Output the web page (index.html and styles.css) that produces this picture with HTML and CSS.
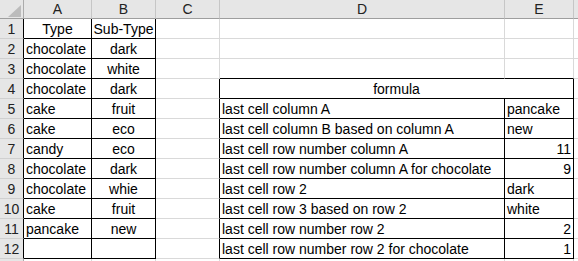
FILE: index.html
```html
<!DOCTYPE html>
<html>
<head>
<meta charset="utf-8">
<link rel="stylesheet" href="styles.css">
</head>
<body>
<div class="sheet">
  <div class="c hd corner"><span class="tri"></span></div>
  <div class="c hd ch">A</div>
  <div class="c hd ch">B</div>
  <div class="c hd ch">C</div>
  <div class="c hd ch">D</div>
  <div class="c hd ch">E</div>
  <div class="c hd ch"></div>

  <div class="c hd rh bl">1</div>
  <div class="c bx ctr">Type</div>
  <div class="c bx ctr">Sub-Type</div>
  <div class="c"></div>
  <div class="c"></div>
  <div class="c"></div>
  <div class="c"></div>

  <div class="c hd rh bl">2</div>
  <div class="c bx">chocolate</div>
  <div class="c bx ctr">dark</div>
  <div class="c"></div>
  <div class="c"></div>
  <div class="c"></div>
  <div class="c"></div>

  <div class="c hd rh bl">3</div>
  <div class="c bx">chocolate</div>
  <div class="c bx ctr">white</div>
  <div class="c"></div>
  <div class="c bb"></div>
  <div class="c bb"></div>
  <div class="c"></div>

  <div class="c hd rh bl">4</div>
  <div class="c bx">chocolate</div>
  <div class="c bx ctr">dark</div>
  <div class="c br"></div>
  <div class="c bx ctr merge">formula</div>
  <div class="c"></div>

  <div class="c hd rh bl">5</div>
  <div class="c bx">cake</div>
  <div class="c bx ctr">fruit</div>
  <div class="c br"></div>
  <div class="c bx">last cell column A</div>
  <div class="c bx">pancake</div>
  <div class="c"></div>

  <div class="c hd rh bl">6</div>
  <div class="c bx">cake</div>
  <div class="c bx ctr">eco</div>
  <div class="c br"></div>
  <div class="c bx">last cell column B based on column A</div>
  <div class="c bx">new</div>
  <div class="c"></div>

  <div class="c hd rh bl">7</div>
  <div class="c bx">candy</div>
  <div class="c bx ctr">eco</div>
  <div class="c br"></div>
  <div class="c bx">last cell row number column A</div>
  <div class="c bx num">11</div>
  <div class="c"></div>

  <div class="c hd rh bl">8</div>
  <div class="c bx">chocolate</div>
  <div class="c bx ctr">dark</div>
  <div class="c br"></div>
  <div class="c bx">last cell row number column A for chocolate</div>
  <div class="c bx num">9</div>
  <div class="c"></div>

  <div class="c hd rh bl">9</div>
  <div class="c bx">chocolate</div>
  <div class="c bx ctr">whie</div>
  <div class="c br"></div>
  <div class="c bx">last cell row 2</div>
  <div class="c bx">dark</div>
  <div class="c"></div>

  <div class="c hd rh bl">10</div>
  <div class="c bx">cake</div>
  <div class="c bx ctr">fruit</div>
  <div class="c br"></div>
  <div class="c bx">last cell row 3 based on row 2</div>
  <div class="c bx">white</div>
  <div class="c"></div>

  <div class="c hd rh bl">11</div>
  <div class="c bx">pancake</div>
  <div class="c bx ctr">new</div>
  <div class="c br"></div>
  <div class="c bx">last cell row number row 2</div>
  <div class="c bx num">2</div>
  <div class="c"></div>

  <div class="c hd rh bl">12</div>
  <div class="c bx"></div>
  <div class="c bx"></div>
  <div class="c br"></div>
  <div class="c bx">last cell row number row 2 for chocolate</div>
  <div class="c bx num">1</div>
  <div class="c"></div>

  <div class="c hd rh"></div>
  <div class="c"></div>
  <div class="c"></div>
  <div class="c"></div>
  <div class="c"></div>
  <div class="c"></div>
  <div class="c"></div>
</div>
</body>
</html>
```

FILE: styles.css
```css
html, body {
  margin: 0;
  padding: 0;
  background: #ffffff;
  overflow: hidden;
}

.sheet {
  display: grid;
  grid-template-columns: 24px 68px 64px 64px 285px 69px 1fr;
  grid-template-rows: 19px repeat(13, 20px);
  width: 578px;
  font-family: "Liberation Sans", Arial, sans-serif;
  font-size: 14px;
  color: #000;
}

.c {
  box-sizing: border-box;
  border-right: 1px solid #d9d9d9;
  border-bottom: 1px solid #d9d9d9;
  display: flex;
  align-items: center;
  padding: 0 2px;
  white-space: nowrap;
  overflow: hidden;
  line-height: 16px;
}

.hd {
  background: #e6e6e6;
  color: #222;
  justify-content: center;
  padding: 0;
}

.ch {
  border-right: 1px solid #c6c6c6;
  border-bottom: 1px solid #9e9e9e;
}

.corner {
  border-right: 1px solid #ababab;
  border-bottom: 1px solid #9e9e9e;
  justify-content: flex-end;
  align-items: flex-end;
  padding: 0 2px 1px 0;
}

.tri {
  width: 0;
  height: 0;
  border-left: 13px solid transparent;
  border-bottom: 12px solid #bcbcbc;
}

.rh {
  border-right: 1px solid #ababab;
  border-bottom: 1px solid #d0d0d0;
}

.rh.bl {
  border-right-color: #000;
}

.bx {
  border-right-color: #000;
  border-bottom-color: #000;
}

.bb {
  border-bottom-color: #000;
}

.br {
  border-right-color: #000;
}

.ctr {
  justify-content: center;
}

.num {
  justify-content: flex-end;
}

.merge {
  grid-column: span 2;
}
```
